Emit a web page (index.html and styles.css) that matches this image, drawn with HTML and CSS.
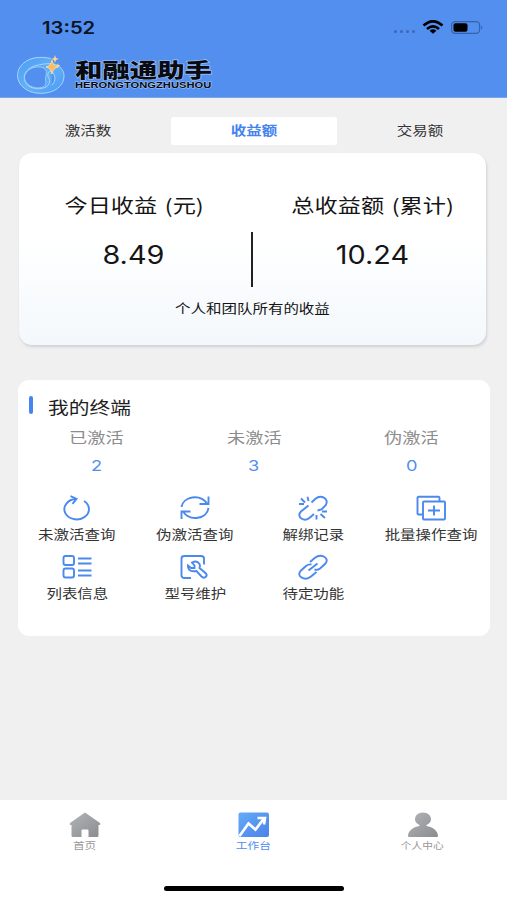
FILE: index.html
```html
<!DOCTYPE html>
<html lang="zh-CN">
<head>
<meta charset="utf-8">
<title>和融通助手</title>
<link rel="stylesheet" href="styles.css">
</head>
<body>
<div class="app">
  <header class="header">
    <div class="status">
      <span class="wide time">13:52</span>
      <svg class="status-icons" width="92" height="16" viewBox="0 0 92 16">
        <g fill="#3d68b4"><circle cx="2.500" cy="11.500" r="1.500"/><circle cx="8.500" cy="11.500" r="1.500"/><circle cx="14.500" cy="11.500" r="1.500"/><circle cx="20.500" cy="11.500" r="1.500"/></g>
        <g fill="none" stroke="#000" stroke-width="2.700"><path d="M30.500 5.600Q40-2.800 49.500 5.600"/><path d="M34 9Q40 3.600 46 9"/></g>
        <path d="M36.600 10.700Q40 8 43.400 10.700L40 13.800Z"/>
        <rect x="58.600" y="1.600" width="28" height="11.800" rx="3.600" fill="none" stroke="#3762ab" stroke-width="1.200"/>
        <rect x="60.500" y="3.300" width="14" height="8.400" rx="2"/>
        <path d="M88.200 5.500q2.500 2 0 4z" fill="#3762ab"/>
      </svg>
    </div>
    <div class="brand">
      <svg class="brand-mark" width="50" height="42" viewBox="0 0 50 42">
        <defs><linearGradient id="ring" x1="0" y1="0" x2="1" y2="1"><stop offset="0" stop-color="#4c9cf3"/><stop offset=".5" stop-color="#62b1f8"/><stop offset="1" stop-color="#4b9cf4"/></linearGradient></defs>
        <path d="M35 4.500C24 2 11 3 4 13C-3 25 6 37 20 39C36 41 48 33 48 22C48 17 45 13 41 11C37 9 26 9 16 13C8 17 6 25 11 30.500C15 35 24 36 30 33C34 30.500 34.500 26 32 22.500Q31 18 35 17C40 21 40 27 36 31" fill="url(#ring)" stroke="#a9d5fc" stroke-width="1" stroke-linejoin="round"/>
        <path d="M28 14C19 10.500 9 16 8.500 23C8 30 17 35.500 26 33.500C33 31 28 26 30 22Q32 17 28 14Z" fill="#528fee" stroke="#a7d3fb" stroke-width=".8"/>
        <path d="M36 6Q37 12 42 13Q37 14 36 20Q35 14 30 13Q35 12 36 6Z" fill="#ffbd59" stroke="#ffe0ae" stroke-width=".8"/>
        <path d="M39 1l1 3 3 1-3 1-1 3-1-3-3-1 3-1zM42 9l.6 2 2 .6-2 .6-.6 2-.6-2-2-.6 2-.6z" fill="#ffd590"/>
      </svg>
      <div class="brand-text">
        <span class="wide brand-cn">和融通助手</span>
        <span class="wide brand-en">HERONGTONGZHUSHOU</span>
      </div>
    </div>
  </header>

  <nav class="tabs">
    <div class="tab"><span class="wide">激活数</span></div>
    <div class="tab tab-active"><span class="wide">收益额</span></div>
    <div class="tab"><span class="wide">交易额</span></div>
  </nav>

  <section class="income">
    <div class="income-row">
      <div class="income-col">
        <span class="wide income-label">今日收益 (元)</span>
        <span class="wide income-value">8.49</span>
      </div>
      <div class="divider"></div>
      <div class="income-col income-total">
        <span class="wide income-label">总收益额 (累计)</span>
        <span class="wide income-value">10.24</span>
      </div>
    </div>
    <div class="income-note"><span class="wide">个人和团队所有的收益</span></div>
  </section>

  <section class="terminal">
    <h2 class="terminal-title"><span class="wide">我的终端</span></h2>
    <div class="stats">
      <div class="stat"><span class="wide">已激活</span><span class="wide stat-value">2</span></div>
      <div class="stat"><span class="wide">未激活</span><span class="wide stat-value">3</span></div>
      <div class="stat"><span class="wide">伪激活</span><span class="wide stat-value">0</span></div>
    </div>
    <div class="actions">
      <div class="action">
        <svg class="icon" viewBox="0 0 32 26"><path d="M15 4A12.300 10.200 0 1 0 23 6"/><path d="M9.500 1.200L15.500 3.900L11.500 8.800"/></svg>
        <span class="wide">未激活查询</span>
      </div>
      <div class="action">
        <svg class="icon" viewBox="0 0 32 26"><path d="M2.500 12C4 1.500 21-1.500 28 8.500M29.500 1.500V9H20.500"/><path d="M29.500 13C28 24 11 27 4 16.500M2.500 24V16.500H11.500"/></svg>
        <span class="wide">伪激活查询</span>
      </div>
      <div class="action">
        <svg class="icon" viewBox="0 0 32 26"><path d="M14.500 7.500L18.500 3.800C24-1 33 4 28.500 10.500L24.500 14.500L20.500 15.500M11.500 10.500L4 16.500C-1.500 22 7.500 27.500 13 22.500L17 19"/><path d="M10.500 1.800L11.500 6M4 3.500L8 7.500M2 9H7M19.500 20V24.500M23.500 19L28 23M25 16.500H30"/></svg>
        <span class="wide">解绑记录</span>
      </div>
      <div class="action">
        <svg class="icon" viewBox="0 0 32 26"><path d="M7.500 19.500H3.500Q2.500 19.500 2.500 18.500V2.800Q2.500 1.800 3.500 1.800H23.500Q24.500 1.800 24.500 2.800V6.500"/><rect x="8" y="6.500" width="22" height="18" rx="1"/><path d="M13 15.500H25M19 10.500V20.500"/></svg>
        <span class="wide">批量操作查询</span>
      </div>
      <div class="action">
        <svg class="icon" viewBox="0 0 32 26"><rect x="2.500" y="2" width="10.500" height="9" rx="2"/><rect x="2.500" y="14.500" width="10.500" height="9" rx="2"/><path d="M17 4.500H30.500M17 9.500H30.500M17 16.500H30.500M17 21.500H30.500"/></svg>
        <span class="wide">列表信息</span>
      </div>
      <div class="action">
        <svg class="icon" viewBox="0 0 32 26"><path d="M12 24H5.500Q2.500 24 2.500 21.500V4.500Q2.500 2 5.500 2H22Q25 2 25 4.500V10.500"/><path d="M13 8.500Q18 6 20.500 10Q21.500 12 20.500 14L27 19.500Q28.500 21.500 26.500 23Q24.500 24.500 22.500 22.500L17.500 17Q10 18.500 9 13V11.500L12 14H15.500V11.500Z"/></svg>
        <span class="wide">型号维护</span>
      </div>
      <div class="action">
        <svg class="icon" viewBox="0 0 32 26"><path d="M13 8L18 3.800C24-1 33 4 28.500 9.500L23 14.500Q20.500 16.500 17.500 15.500"/><path d="M19.500 18L14 22.500C8 27.500-1 22.500 3.500 17L9 12Q11.500 10 14.500 10.500M11.500 16.500L20.500 9.500"/></svg>
        <span class="wide">待定功能</span>
      </div>
    </div>
  </section>

  <footer class="footer">
    <div class="footer-tabs">
      <div class="footer-tab">
        <svg width="32" height="26" viewBox="0 0 32 26"><defs><linearGradient id="grey" x1="0" y1="0" x2="1" y2="1"><stop offset="0" stop-color="#b3b4b7"/><stop offset="1" stop-color="#8b8c90"/></linearGradient></defs><path d="M16 0.500L31 11Q32 12.500 30.500 13H29.500V23.500Q29.500 25 28 25H19.500V18.500Q19.500 17.500 18.500 17.500H13.500Q12.500 17.500 12.500 18.500V25H4Q2.500 25 2.500 23.500V13H1.500Q0 12.500 1 11Z" fill="url(#grey)"/></svg>
        <span class="wide">首页</span>
      </div>
      <div class="footer-tab footer-active">
        <svg width="32" height="26" viewBox="0 0 32 26"><defs><linearGradient id="blue" x1="0" y1="0" x2="1" y2="1"><stop offset="0" stop-color="#65abf8"/><stop offset="1" stop-color="#4a82e9"/></linearGradient></defs><rect x=".5" y=".5" width="30.500" height="24.500" rx="2" fill="url(#blue)"/><path d="M1.500 24L10.500 11.500L17.500 17.500L26 6.500M19.500 6H27L26 12.500" fill="none" stroke="#fff" stroke-width="2.600"/></svg>
        <span class="wide">工作台</span>
      </div>
      <div class="footer-tab">
        <svg width="32" height="26" viewBox="0 0 32 26"><path d="M16 .5C21 .5 24 3.500 24 7.500C24 10 22 12 19.500 13V14C26 15 31 19 31 24Q31 25 30 25H2Q1 25 1 24C1 19 6 15 12.500 14V13C10 12 8 10 8 7.500C8 3.500 11 .5 16 .5Z" fill="url(#grey)"/></svg>
        <span class="wide">个人中心</span>
      </div>
    </div>
    <div class="home-bar"></div>
  </footer>
</div>
</body>
</html>
```
FILE: styles.css
```css
* { box-sizing: border-box; }
body {
  margin: 0;
  background: #f0f0f0;
  font-family: "Noto Sans CJK SC", sans-serif;
  color: #333;
}
.app {
  width: 507px;
  height: 900px;
  display: flex;
  flex-direction: column;
  overflow: hidden;
}
.wide {
  display: inline-block;
  white-space: nowrap;
  transform: scaleX(1.22);
}

.header {
  height: 98px;
  background: #528fee;
  border-bottom: 1px solid #79a5e8;
}
.status {
  height: 54px;
  padding: 1px 22px 0 42px;
  display: flex;
  justify-content: space-between;
  align-items: center;
}
.time {
  font: 600 17px/20px Inter, sans-serif;
  color: #0b1424;
  transform: scaleX(1.19);
  transform-origin: left;
}
.brand { display: flex; padding-left: 16px; }
.brand-text {
  display: flex;
  flex-direction: column;
  align-items: flex-start;
  padding: 5px 0 0 9px;
  color: #080b12;
}
.brand-text .wide { transform-origin: left; }
.brand-text .brand-cn {
  font: 900 20px/21px "Noto Sans CJK SC", sans-serif;
  -webkit-text-stroke: 1.200px #a9c6f3;
  paint-order: stroke fill;
  transform: scaleX(1.370);
}
.brand-text .brand-en {
  margin-top: 1px;
  font: 700 9px/9px "Liberation Sans", sans-serif;
  -webkit-text-stroke: 1px #a9c6f3;
  paint-order: stroke fill;
  transform: scaleX(1.240);
}

.tabs {
  height: 55px;
  padding: 19px 4px 8px 5px;
  display: grid;
  grid-template-columns: repeat(3, 1fr);
}
.tab {
  height: 28px;
  line-height: 26px;
  text-align: center;
  font-size: 12.700px;
}
.tab-active {
  background: #fff;
  color: #4483ee;
  font-weight: 700;
  border-radius: 2px;
}

.income {
  flex: none;
  width: 467px;
  height: 192px;
  margin-left: 18.500px;
  border-radius: 13px;
  background:
    linear-gradient(to bottom, transparent 45%, #f3f8fc 100%),
    #fff;
  box-shadow: 1px 2px 3px #cfd1d4;
  color: #151515;
}
.income-row { display: flex; height: 142px; padding-top: 38px; }
.income-col {
  width: 234px;
  display: flex;
  flex-direction: column;
  align-items: center;
  padding-right: 2px;
}
.income-total { padding: 0 0 0 6px; }
.income-label { font-size: 19px; line-height: 28px; word-spacing: 2px; }
.income-value {
  margin-top: 21px;
  font: 400 25.500px/30px Inter, sans-serif;
  transform: scaleX(1.130);
}
.divider { width: 1.500px; height: 55px; margin-top: 41px; background: #222; }
.income-note { text-align: center; font-size: 12.700px; line-height: 26px; padding-left: 1px; }

.terminal {
  flex: none;
  width: 472px;
  height: 256px;
  margin: 35px 0 0 18px;
  border-radius: 11px;
  background: #fff;
}
.terminal-title {
  margin: 0;
  padding: 16px 0 0 11px;
  height: 45px;
  display: flex;
  gap: 15px;
  font-size: 17px;
  font-weight: 400;
  line-height: 21px;
  color: #1e1e1e;
}
.terminal-title::before {
  content: "";
  width: 4px;
  height: 18px;
  border-radius: 2px;
  background: #4685f1;
}
.terminal-title .wide { transform-origin: left; }
.stats {
  display: grid;
  grid-template-columns: repeat(3, 1fr);
  height: 66px;
}
.stat {
  display: flex;
  flex-direction: column;
  align-items: center;
  font-size: 14.900px;
  line-height: 24px;
  color: #8c8c8c;
}
.stat-value { margin-top: 5px; color: #528fee; font-family: Inter, sans-serif; }
.actions {
  display: grid;
  grid-template-columns: repeat(4, 118px);
  grid-auto-rows: 58.500px;
}
.action {
  display: flex;
  flex-direction: column;
  align-items: center;
  padding-top: 4px;
  font-size: 12.700px;
  line-height: 25px;
}
.icon {
  width: 32px;
  height: 26px;
  fill: none;
  stroke: #4b89ed;
  stroke-width: 1.900;
}

.footer {
  height: 100px;
  margin-top: auto;
  background: #fff;
}
.footer-tabs {
  display: grid;
  grid-template-columns: repeat(3, 1fr);
  padding-top: 12px;
  height: 86px;
}
.footer-tab {
  display: flex;
  flex-direction: column;
  align-items: center;
  font-size: 9.600px;
  line-height: 15px;
  color: #999;
}
.footer-tab:last-child .wide { transform: scaleX(1.120); }
.footer-active { color: #528fee; }
.home-bar {
  width: 180px;
  height: 5px;
  margin: 0 auto;
  border-radius: 3px;
  background: #000;
}
```
